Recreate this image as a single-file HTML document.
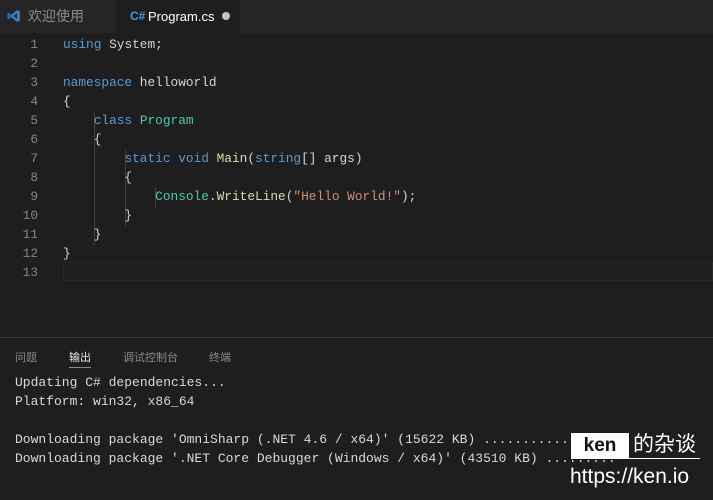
<!DOCTYPE html>
<html><head><meta charset="utf-8"><style>
body{margin:0;width:713px;height:500px;background:#1e1e1e;overflow:hidden;position:relative;font-family:"Liberation Sans","Noto Sans CJK SC",sans-serif}
.tabs{position:absolute;left:0;top:0;width:713px;height:33px;background:#252526}
.tab{position:absolute;top:0;height:33px;line-height:33px;font-size:13px}
.mono{font-family:"Liberation Mono",monospace;font-size:12.8px}
.ln{position:absolute;left:0;width:38px;text-align:right;color:#858585}
.code{position:absolute;left:63px;white-space:pre;color:#d4d4d4}
.k{color:#569cd6}.t{color:#4ec9b0}.s{color:#ce9178}.f{color:#dcdcaa}
.out{position:absolute;left:15px;white-space:pre;color:#d8d8d8;font-size:13px}
.guide{position:absolute;width:1px;background:#404040}
</style></head><body>
<div class="tabs">
 <div class="tab" style="left:0;width:116px;color:#8b8b8b">
  <svg style="position:absolute;left:7px;top:9px" width="14" height="14" viewBox="0 0 14 14"><path d="M10 1 L13 2.5 V11.5 L10 13 L4 8 L1.5 10 L0.5 9.3 V4.7 L1.5 4 L4 6 Z M10 4.5 L6.5 7 L10 9.5 Z M1.8 5.8 V8.2 L3 7 Z" fill="#2f7fc9"/></svg>
  <span style="position:absolute;left:28px;font-size:14px">欢迎使用</span></div>
 <div class="tab" style="left:116px;width:124px;background:#1e1e1e;color:#fff">
  <span style="position:absolute;left:14px;color:#3c9ee6;font-weight:bold;font-size:12px">C#</span>
  <span style="position:absolute;left:32px">Program.cs</span>
  <span style="position:absolute;left:106px;top:12px;width:8px;height:8px;border-radius:50%;background:#c5c5c5"></span></div>
</div>
<div class="mono">
<div style="position:absolute;left:63px;right:0;top:262px;height:17px;border:1px solid #282828"></div>
<div class="guide" style="left:94px;top:112px;height:133px"></div>
<div class="guide" style="left:125px;top:150px;height:76px"></div>
<div class="guide" style="left:155px;top:188px;height:19px"></div>
<div class="ln" style="top:37px">1</div><div class="code" style="top:37px"><span class="k">using</span> System;</div>
<div class="ln" style="top:56px">2</div>
<div class="ln" style="top:75px">3</div><div class="code" style="top:75px"><span class="k">namespace</span> helloworld</div>
<div class="ln" style="top:94px">4</div><div class="code" style="top:94px">{</div>
<div class="ln" style="top:113px">5</div><div class="code" style="top:113px">    <span class="k">class</span> <span class="t">Program</span></div>
<div class="ln" style="top:132px">6</div><div class="code" style="top:132px">    {</div>
<div class="ln" style="top:151px">7</div><div class="code" style="top:151px">        <span class="k">static</span> <span class="k">void</span> <span class="f">Main</span>(<span class="k">string</span>[] args)</div>
<div class="ln" style="top:170px">8</div><div class="code" style="top:170px">        {</div>
<div class="ln" style="top:189px">9</div><div class="code" style="top:189px">            <span class="t">Console</span>.<span class="f">WriteLine</span>(<span class="s">"Hello World!"</span>);</div>
<div class="ln" style="top:208px">10</div><div class="code" style="top:208px">        }</div>
<div class="ln" style="top:227px">11</div><div class="code" style="top:227px">    }</div>
<div class="ln" style="top:246px">12</div><div class="code" style="top:246px">}</div>
<div class="ln" style="top:265px">13</div>
</div>
<div style="position:absolute;left:0;top:337px;width:713px;height:1px;background:#3c3c3c"></div>
<div style="position:absolute;top:349px;left:15px;font-size:11px;color:#8b8b8b">问题</div>
<div style="position:absolute;top:349px;left:69px;font-size:11px;color:#e7e7e7">输出</div>
<div style="position:absolute;top:367px;left:69px;width:22px;height:1px;background:#8b8b8b"></div>
<div style="position:absolute;top:349px;left:123px;font-size:11px;color:#8b8b8b">调试控制台</div>
<div style="position:absolute;top:349px;left:209px;font-size:11px;color:#8b8b8b">终端</div>
<div class="mono">
<div class="out" style="top:375px">Updating C# dependencies...</div>
<div class="out" style="top:394px">Platform: win32, x86_64</div>
<div class="out" style="top:432px">Downloading package 'OmniSharp (.NET 4.6 / x64)' (15622 KB) ............ Done!</div>
<div class="out" style="top:451px">Downloading package '.NET Core Debugger (Windows / x64)' (43510 KB) .........</div>
</div>
<div style="position:absolute;left:571px;top:433px;width:58px;height:25px;background:#fff;color:#111;font-weight:bold;font-size:19px;text-align:center;line-height:25px">ken</div>
<div style="position:absolute;left:630px;top:431px;width:70px;font-size:21px;color:#fff;background:#1e1e1e;line-height:28px;padding-left:3px">的杂谈</div>
<div style="position:absolute;left:571px;top:458px;width:129px;height:1px;background:#fff"></div>
<div style="position:absolute;left:570px;top:465px;font-size:21px;color:#fff">https://ken.io</div>
</body></html>
